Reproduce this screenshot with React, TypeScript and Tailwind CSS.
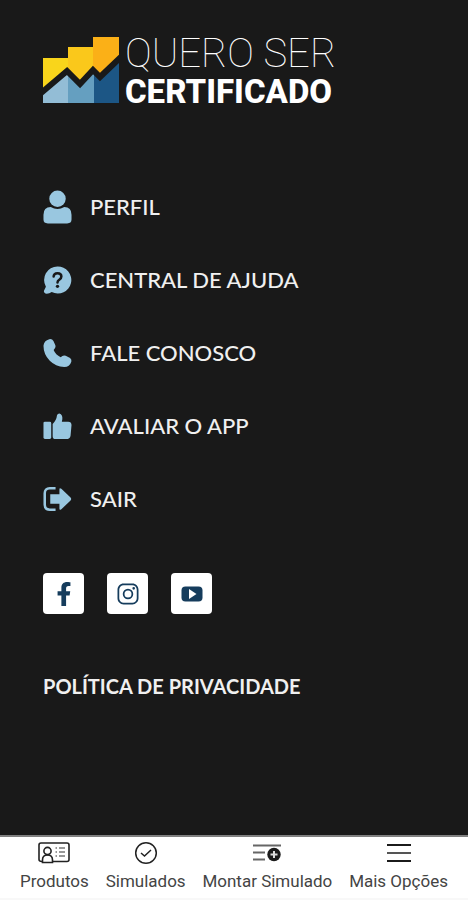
import type { ReactNode } from "react";
import { FaFacebookF } from "react-icons/fa";
import { IoLogoInstagram } from "react-icons/io5";

function LogoMark() {
  return (
    <svg width="76" height="68" viewBox="0 0 76 68" aria-hidden="true">
      <path d="M0 22H25V40L0 54Z" fill="#f9d51b" />
      <path d="M25 11H50V40L37 48L25 38Z" fill="#fac81b" />
      <path d="M50 1H76V22L57 40L50 34Z" fill="#fbb017" />
      <path d="M0 55L24 36L25 37V67H0Z" fill="#93bdd6" />
      <path d="M25 37L37 48L51 35V67H25Z" fill="#659fc0" />
      <path d="M51 35L57 41L76 23V67H51Z" fill="#1c5685" />
      <path d="M-2 57L24 35L37 48L50 34L57 41L78 21" fill="none" stroke="#191919" strokeWidth="6" />
    </svg>
  );
}

function PersonIcon() {
  return (
    <svg width="30" height="36" viewBox="0 0 30 36" fill="#99c7e0" aria-hidden="true">
      <circle cx="15" cy="9.5" r="8.5" />
      <path d="M8 18Q15 22 22 18Q29.500 18 29.500 26V31Q29.500 35 25 35H5Q.5 35 .5 31V26Q.5 18 8 18Z" />
    </svg>
  );
}

function HelpIcon() {
  return (
    <svg width="30" height="30" viewBox="0 0 30 30" aria-hidden="true">
      <path d="M15 1A14 14 0 1 1 9 27.5Q6 29.500 2.500 29Q.5 28 1 26L3 22A14 14 0 0 1 15 1Z" fill="#99c7e0" />
      <path d="M11 11.500Q11 8 15 8T19 11.500Q19 13.500 17 14.500Q15 15.500 15 17.500" fill="none" stroke="#191919" strokeWidth="2.600" strokeLinecap="round" />
      <circle cx="15" cy="21.500" r="1.700" fill="#191919" />
    </svg>
  );
}

function PhoneIcon() {
  return (
    <svg width="30" height="30" viewBox="0 0 30 30" fill="#99c7e0" aria-hidden="true">
      <path d="M6.500 .7Q9.500 .2 10.800 2.700L12.800 7Q13.500 9 12 10.600L11 12Q13 17 18.300 19.300L20 18.200Q21.500 17 23.500 17.800L28 20.300Q30 22 29.300 24Q27.500 29.500 22 29.500Q13 29 7 23Q.5 16.500 .5 7.500Q1 2 6.500 .7Z" />
    </svg>
  );
}

function ThumbIcon() {
  return (
    <svg width="30" height="30" viewBox="0 0 30 30" fill="#99c7e0" aria-hidden="true">
      <rect x=".5" y="10.500" width="8" height="18" rx="1.500" />
      <path d="M10 13Q14 9 14.500 4Q15 2 17 2Q20.500 3 20 8L19.500 10.500H26Q29.500 10.500 29.500 14L28.500 25Q28 28.500 24 28.500H13Q10 28.500 10 25.500Z" />
    </svg>
  );
}

function ExitIcon() {
  return (
    <svg width="30" height="28" viewBox="0 0 30 28" aria-hidden="true">
      <path d="M13 3H7Q1.800 3 1.800 8V20Q1.800 25 7 25H13" fill="none" stroke="#99c7e0" strokeWidth="2.600" />
      <path d="M7.500 9H17V4Q17 2 19 3.500L28.500 12.500Q29.800 14 28.500 15.500L19 24.500Q17 26 17 24V19H7.500Z" fill="#99c7e0" />
    </svg>
  );
}

function VideoIcon() {
  return (
    <svg width="22" height="16" viewBox="0 0 22 16" aria-hidden="true">
      <rect x=".5" y=".5" width="21" height="15" rx="4" fill="#153c5c" />
      <path d="M8 3V13L15.500 8Z" fill="#fff" />
    </svg>
  );
}

function CardIcon() {
  return (
    <svg width="34" height="24" viewBox="0 0 34 24" fill="none" stroke="#222" strokeWidth="1.600" aria-hidden="true">
      <path d="M5 20.500Q2 20.500 2 18.500V4Q2 2 4 2H30Q32 2 32 4V18.500Q32 20.500 30 20.500H16" />
      <circle cx="10.500" cy="10" r="3.600" />
      <path d="M5.500 21.500V19Q5.500 14 10.500 14T15.500 19V21.500Z" />
      <path d="M18.500 7H20M18.500 11H20M18.500 15H20M22 7H28M22 11H28M22 15H28" stroke="#777" />
    </svg>
  );
}

function CheckIcon() {
  return (
    <svg width="24" height="24" viewBox="0 0 24 24" fill="none" stroke="#222" strokeWidth="1.500" aria-hidden="true">
      <circle cx="12" cy="12" r="10.300" />
      <path d="M7 12L10.500 15L17 9" />
    </svg>
  );
}

function ListAddIcon() {
  return (
    <svg width="30" height="24" viewBox="0 0 30 24" aria-hidden="true">
      <path d="M1 4.500H29M1 11.500H13M1 18.500H13" stroke="#666" strokeWidth="2.200" />
      <circle cx="22" cy="13.500" r="6.700" fill="#1b1b1b" />
      <path d="M22 10V17M18.500 13.500H25.500" stroke="#ddd" strokeWidth="2" />
    </svg>
  );
}

function BarsIcon() {
  return (
    <svg width="26" height="24" viewBox="0 0 26 24" fill="none" strokeWidth="2" aria-hidden="true">
      <path d="M1 4H25M1 20H25" stroke="#1b1b1b" />
      <path d="M1 12H25" stroke="#555" />
    </svg>
  );
}

const menu: { label: string; icon: ReactNode }[] = [
  { label: "PERFIL", icon: <PersonIcon /> },
  { label: "CENTRAL DE AJUDA", icon: <HelpIcon /> },
  { label: "FALE CONOSCO", icon: <PhoneIcon /> },
  { label: "AVALIAR O APP", icon: <ThumbIcon /> },
  { label: "SAIR", icon: <ExitIcon /> },
];

const social: { label: string; icon: ReactNode }[] = [
  { label: "Facebook", icon: <FaFacebookF size={24} /> },
  { label: "Instagram", icon: <IoLogoInstagram size={24} /> },
  { label: "YouTube", icon: <VideoIcon /> },
];

const tabs: { label: string; icon: ReactNode }[] = [
  { label: "Produtos", icon: <CardIcon /> },
  { label: "Simulados", icon: <CheckIcon /> },
  { label: "Montar Simulado", icon: <ListAddIcon /> },
  { label: "Mais Opções", icon: <BarsIcon /> },
];

export default function App() {
  return (
    <div className="flex min-h-screen flex-col bg-[#191919] font-['Lato',sans-serif] text-[#f0f0f0]">
      <main className="flex-1 px-[43px] pt-9">
        <header className="flex h-[72px] items-start gap-1.5">
          <LogoMark />
          <div className="font-['Roboto',sans-serif] whitespace-nowrap">
            <p className="text-[40px] leading-9 font-thin text-white">QUERO SER</p>
            <p className="text-[33px] leading-10 font-extrabold text-white">CERTIFICADO</p>
          </div>
        </header>

        <ul className="mt-[62px]">
          {menu.map((item) => (
            <li key={item.label}>
              <button type="button" className="flex h-[73px] w-full items-center gap-[18px] text-left text-[22px] leading-7 font-medium">
                <span className="flex w-[29px] shrink-0 justify-center">{item.icon}</span>
                {item.label}
              </button>
            </li>
          ))}
        </ul>

        <div className="mt-[38px] flex gap-[23px]">
          {social.map((item) => (
            <a key={item.label} href="#" aria-label={item.label} className="flex size-[41px] items-center justify-center rounded bg-white text-[#153c5c]">
              {item.icon}
            </a>
          ))}
        </div>

        <a href="#" className="mt-[60px] inline-block text-[20px] leading-6 font-bold">
          POLÍTICA DE PRIVACIDADE
        </a>
      </main>

      <nav className="flex h-[65px] justify-between border-t-2 border-b-2 border-t-[#808080] border-b-[#f8f8f8] bg-white px-5 pt-1 font-['Roboto',sans-serif] text-[17px] leading-6 text-[#444]">
        {tabs.map((tab) => (
          <button key={tab.label} type="button" className="flex flex-col items-center gap-1 self-start whitespace-nowrap">
            {tab.icon}
            {tab.label}
          </button>
        ))}
      </nav>
    </div>
  );
}
